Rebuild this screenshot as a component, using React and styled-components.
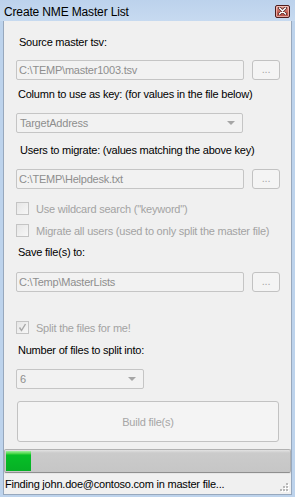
import styled, { createGlobalStyle } from 'styled-components';

const GlobalStyle = createGlobalStyle`
    html, body {
        margin: 0;
        padding: 0;
        background: #b9d1ea;
    }
    * {
        box-sizing: border-box;
    }
`;

const Frame = styled.div`
    width: 295px;
    height: 497px;
    display: flex;
    flex-direction: column;
    background: #bdd3ec;
    font-family: "Liberation Sans", Arial, sans-serif;
    font-size: 11px;
    letter-spacing: -0.22px;
    overflow: hidden;
`;

const TitleBar = styled.div`
    height: 21px;
    flex: none;
    display: flex;
    align-items: center;
    justify-content: space-between;
    padding: 0 5px 0 4px;
    background: linear-gradient(#bcd2ec, #c7daf0);
    .caption {
        font-size: 12px;
        letter-spacing: -0.15px;
        color: #000;
        padding-top: 2px;
    }
`;

const CloseButton = styled.div`
    width: 15px;
    height: 13px;
    margin-top: 1px;
    border: 1px solid #4e1c1c;
    border-radius: 2px;
    background: linear-gradient(#e39a90, #c15a4f 60%, #b9544a);
    display: flex;
    align-items: center;
    justify-content: center;
    box-shadow: inset 0 0 0 1px rgba(255, 220, 215, 0.6);
`;

const Client = styled.div`
    flex: 1;
    display: flex;
    flex-direction: column;
    margin: 0 3px 3px;
    border: 1px solid #97a8bd;
    border-top: none;
    background: #f0f0f0;
`;

const Content = styled.div`
    flex: 1;
    display: flex;
    flex-direction: column;
    padding: 15px 11px 0 12px;
`;

const Label = styled.div`
    height: 13px;
    line-height: 13px;
    padding-left: ${(p) => p.$indent ?? 3}px;
    margin-top: ${(p) => p.$top ?? 0}px;
    color: #000;
`;

const Row = styled.div`
    display: flex;
    gap: 8px;
    margin-top: ${(p) => p.$top ?? 0}px;
`;

const TextBox = styled.div`
    width: ${(p) => p.$width ?? 228}px;
    height: 20px;
    line-height: 18px;
    padding-left: 2px;
    border: 1px solid #c5c5c5;
    border-radius: 2px;
    background: #f2f2f2;
    color: #8e8e8e;
    white-space: nowrap;
`;

const Combo = styled(TextBox)`
    display: flex;
    align-items: center;
    justify-content: space-between;
    padding: 0 7px 0 3px;
    line-height: normal;
    .arrow {
        width: 0;
        height: 0;
        border-left: 4px solid transparent;
        border-right: 4px solid transparent;
        border-top: 4px solid #a6a6a6;
    }
`;

const BrowseButton = styled.div`
    width: 28px;
    height: 20px;
    border: 1px solid #c2c2c2;
    border-radius: 3px;
    background: #f4f4f4;
    color: #a8a8a8;
    display: flex;
    align-items: center;
    justify-content: center;
    padding-bottom: 2px;
`;

const CheckRow = styled.div`
    display: flex;
    align-items: center;
    gap: 7px;
    height: 13px;
    margin-top: ${(p) => p.$top ?? 0}px;
    color: #a3a3a3;
`;

const Box = styled.div`
    width: 13px;
    height: 13px;
    border: 1px solid #c4c4c4;
    background: linear-gradient(135deg, #e6e6e6, #f7f7f7);
    display: flex;
    align-items: center;
    justify-content: center;
`;

const BuildButton = styled.div`
    height: 41px;
    margin: 12px 1px 0 1px;
    border: 1px solid #c2c2c2;
    border-radius: 3px;
    background: #f4f4f4;
    color: #a6a6a6;
    display: flex;
    align-items: center;
    justify-content: center;
`;

const Progress = styled.div`
    height: 24px;
    margin: 7px 0 0 0;
    border: 1px solid #b1b1b1;
    border-bottom-color: #8f8f8f;
    border-radius: 2px;
    background: linear-gradient(#e2e2e2 0, #cbcbcb 3px, #c6c6c6 100%);
    display: flex;
    padding: 1px;
`;

const ProgressFill = styled.div`
    background: linear-gradient(#9ef09e 0, #3fd33f 3px, #06bf27 4px, #06b025 100%);
`;

const StatusBar = styled.div`
    height: 21px;
    flex: none;
    display: flex;
    align-items: center;
    justify-content: space-between;
    padding: 0 2px 0 1px;
    color: #000;
    border-top: 1px solid #e6e6e6;
    .grip {
        align-self: flex-end;
        margin-bottom: 2px;
    }
`;

const Grip = () => (
    <svg className="grip" width="9" height="9" viewBox="0 0 9 9">
        {[[6, 0], [3, 3], [6, 3], [0, 6], [3, 6], [6, 6]].map(([x, y]) => (
            <g key={`${x}-${y}`}>
                <rect x={x + 1} y={y + 1} width="2" height="2" fill="#ffffff" />
                <rect x={x} y={y} width="2" height="2" fill="#b8b8b8" />
            </g>
        ))}
    </svg>
);

const App = () => {
    const progress = 25;

    return (
        <>
            <GlobalStyle />
            <Frame>
                <TitleBar>
                    <span className="caption">Create NME Master List</span>
                    <CloseButton>
                        <svg width="9" height="8" viewBox="0 0 9 8">
                            <path d="M1.5 1 L7.5 7 M7.5 1 L1.5 7" stroke="#4a2020" strokeWidth="3" strokeLinecap="round" />
                            <path d="M1.5 1 L7.5 7 M7.5 1 L1.5 7" stroke="#ffffff" strokeWidth="1.6" strokeLinecap="round" />
                        </svg>
                    </CloseButton>
                </TitleBar>
                <Client>
                    <Content>
                        <Label>Source master tsv:</Label>
                        <Row $top={11}>
                            <TextBox>C:\TEMP\master1003.tsv</TextBox>
                            <BrowseButton>...</BrowseButton>
                        </Row>
                        <Label $top={8} $indent={2}>Column to use as key: (for values in the file below)</Label>
                        <Row $top={12}>
                            <Combo $width={227}>
                                <span>TargetAddress</span>
                                <span className="arrow" />
                            </Combo>
                        </Row>
                        <Label $top={11} $indent={4}>Users to migrate: (values matching the above key)</Label>
                        <Row $top={12}>
                            <TextBox>C:\TEMP\Helpdesk.txt</TextBox>
                            <BrowseButton>...</BrowseButton>
                        </Row>
                        <CheckRow $top={13}>
                            <Box />
                            <span>Use wildcard search ("keyword")</span>
                        </CheckRow>
                        <CheckRow $top={9}>
                            <Box />
                            <span>Migrate all users (used to only split the master file)</span>
                        </CheckRow>
                        <Label $top={9} $indent={2}>Save file(s) to:</Label>
                        <Row $top={13}>
                            <TextBox>C:\Temp\MasterLists</TextBox>
                            <BrowseButton>...</BrowseButton>
                        </Row>
                        <CheckRow $top={29}>
                            <Box>
                                <svg width="9" height="9" viewBox="0 0 9 9">
                                    <path d="M1.5 4.5 L3.5 7.5 L7.5 1" fill="none" stroke="#a8a8a8" strokeWidth="1.4" />
                                </svg>
                            </Box>
                            <span>Split the files for me!</span>
                        </CheckRow>
                        <Label $top={10} $indent={2}>Number of files to split into:</Label>
                        <Row $top={12}>
                            <Combo $width={128}>
                                <span>6</span>
                                <span className="arrow" />
                            </Combo>
                        </Row>
                        <BuildButton>Build file(s)</BuildButton>
                    </Content>
                    <Progress>
                        <ProgressFill style={{ width: `${progress}px` }} />
                    </Progress>
                    <StatusBar>
                        <span>Finding john.doe@contoso.com in master file...</span>
                        <Grip />
                    </StatusBar>
                </Client>
            </Frame>
        </>
    );
};

export default App;
